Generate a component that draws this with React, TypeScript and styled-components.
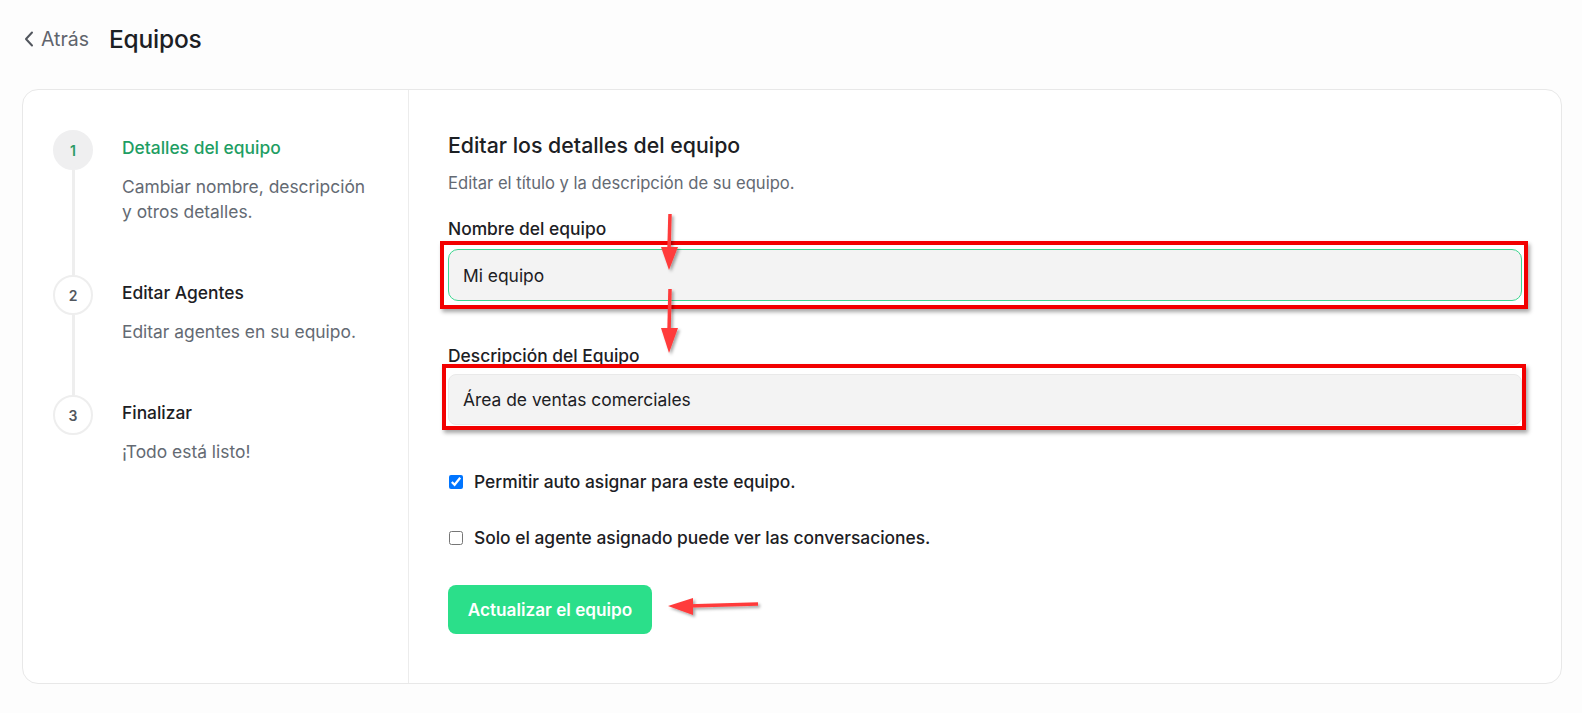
import React from "react";
import styled, { createGlobalStyle } from "styled-components";

const Global = createGlobalStyle`
  * { box-sizing: border-box; }
  html, body { margin: 0; padding: 0; background: #fdfdfd; }
  body { font-family: Inter, "Noto Sans", "Liberation Sans", sans-serif; color: #1c2024; }
`;

const Page = styled.div`
  position: relative;
  width: 1582px;
  height: 713px;
  padding: 0 20px 0 22px;
  overflow: hidden;
`;

const Header = styled.header`
  height: 89px;
  display: flex;
  align-items: center;
  padding-bottom: 11px;
  gap: 20px;
`;

const BackLink = styled.a`
  display: flex;
  align-items: center;
  gap: 7px;
  color: #60646c;
  font-size: 19.5px;
  text-decoration: none;
  padding-left: 2px;
`;

const Title = styled.h1`
  margin: 0;
  font-size: 24.5px;
  font-weight: 500;
  color: #1c2024;
  letter-spacing: -0.2px;
`;

const Card = styled.section`
  display: grid;
  grid-template-columns: 386px 1fr;
  height: 595px;
  background: #fff;
  border: 1px solid #e8e8e8;
  border-radius: 16px;
`;

const Sidebar = styled.aside`
  border-right: 1px solid #ececec;
  padding: 40px 20px 0 30px;
  display: flex;
  flex-direction: column;
`;

const Step = styled.div<{ $last?: boolean }>`
  position: relative;
  display: grid;
  grid-template-columns: 40px 1fr;
  column-gap: 29px;
  padding-bottom: ${(p) => (p.$last ? 0 : 51)}px;
  &::before {
    content: "";
    display: ${(p) => (p.$last ? "none" : "block")};
    position: absolute;
    left: 19px;
    top: 40px;
    bottom: 0;
    width: 2.5px;
    background: #eeeeee;
  }
`;

const Circle = styled.div<{ $active?: boolean }>`
  width: 40px;
  height: 40px;
  border-radius: 50%;
  display: flex;
  align-items: center;
  justify-content: center;
  font-size: 14px;
  font-weight: 600;
  color: ${(p) => (p.$active ? "#2b9a66" : "#52575e")};
  background: ${(p) => (p.$active ? "#efeff0" : "#fff")};
  border: 2px solid ${(p) => (p.$active ? "#efeff0" : "#eeeeee")};
`;

const StepText = styled.div`
  padding-top: 6px;
`;

const StepTitle = styled.div<{ $active?: boolean }>`
  font-size: 17.4px;
  line-height: 24px;
  font-weight: 500;
  color: ${(p) => (p.$active ? "#1e9e63" : "#1c2024")};
  margin-bottom: 14px;
`;

const StepDesc = styled.div`
  font-size: 17.4px;
  line-height: 25px;
  color: #646a73;
`;

const Main = styled.main`
  padding: 41px 39px 0 39px;
  display: flex;
  flex-direction: column;
`;

const Heading = styled.h2`
  margin: 0;
  font-size: 21.3px;
  line-height: 28px;
  font-weight: 500;
  color: #1c2024;
`;

const Sub = styled.p`
  margin: 13px 0 0;
  font-size: 16.6px;
  line-height: 22px;
  color: #646a73;
`;

const Label = styled.label<{ $top: number }>`
  display: block;
  margin-top: ${(p) => p.$top}px;
  font-size: 17.4px;
  line-height: 24px;
  font-weight: 500;
  color: #1c2024;
`;

const Annotated = styled.div<{ $t: number; $r: number; $b: number; $l: number; $mt: number }>`
  position: relative;
  margin-top: ${(p) => p.$mt}px;
  &::after {
    content: "";
    position: absolute;
    top: -${(p) => p.$t}px;
    right: -${(p) => p.$r}px;
    bottom: -${(p) => p.$b}px;
    left: -${(p) => p.$l}px;
    border: 4px solid #f20000;
    box-shadow: 2px 3px 4px rgba(0, 0, 0, 0.35);
    pointer-events: none;
  }
`;

const TextField = styled.input<{ $focus?: boolean }>`
  display: block;
  width: 100%;
  height: 52px;
  padding: 0 14px;
  font: inherit;
  font-size: 17.4px;
  color: #1c2024;
  background: #f3f3f3;
  border: 1px solid ${(p) => (p.$focus ? "#3bd68f" : "#e6e6e6")};
  border-radius: 10px;
  outline: none;
`;

const TextArea = styled.div`
  height: 51px;
  padding: 0 14px;
  display: flex;
  align-items: center;
  font-size: 17.4px;
  color: #1c2024;
  background: #f3f3f3;
  border: 1px solid #e9e9e9;
  border-radius: 8px;
`;

const CheckRow = styled.label<{ $mt: number }>`
  display: flex;
  align-items: center;
  gap: 11px;
  margin-top: ${(p) => p.$mt}px;
  font-size: 17.4px;
  line-height: 22px;
  font-weight: 500;
  color: #1c2024;
  input {
    margin: 0 0 0 1px;
    width: 14px;
    height: 14px;
  }
`;

const Button = styled.button`
  margin-top: 36px;
  width: 204px;
  height: 49px;
  border: none;
  border-radius: 8px;
  background: #2bdf8a;
  color: #fff;
  font: inherit;
  font-size: 17.2px;
  font-weight: 600;
  cursor: pointer;
`;

const Overlay = styled.svg`
  position: absolute;
  left: 0;
  top: 0;
  pointer-events: none;
`;

export default function App() {
  return (
    <Page>
      <Global />
      <Header>
        <BackLink href="#">
          <svg width="10" height="16" viewBox="0 0 10 16">
            <path d="M8 1.5 L2 8 L8 14.5" fill="none" stroke="#52575e" strokeWidth="2" strokeLinecap="round" strokeLinejoin="round" />
          </svg>
          Atrás
        </BackLink>
        <Title>Equipos</Title>
      </Header>
      <Card>
        <Sidebar>
          <Step>
            <Circle $active>1</Circle>
            <StepText>
              <StepTitle $active>Detalles del equipo</StepTitle>
              <StepDesc>
                Cambiar nombre, descripción
                <br />y otros detalles.
              </StepDesc>
            </StepText>
          </Step>
          <Step>
            <Circle>2</Circle>
            <StepText>
              <StepTitle>Editar Agentes</StepTitle>
              <StepDesc>Editar agentes en su equipo.</StepDesc>
            </StepText>
          </Step>
          <Step $last>
            <Circle>3</Circle>
            <StepText>
              <StepTitle>Finalizar</StepTitle>
              <StepDesc>¡Todo está listo!</StepDesc>
            </StepText>
          </Step>
        </Sidebar>
        <Main>
          <Heading>Editar los detalles del equipo</Heading>
          <Sub>Editar el título y la descripción de su equipo.</Sub>
          <Label $top={23}>Nombre del equipo</Label>
          <Annotated $mt={8} $t={8} $r={6} $b={8} $l={8}>
            <TextField $focus defaultValue="Mi equipo" />
          </Annotated>
          <Label $top={43}>Descripción del Equipo</Label>
          <Annotated $mt={6} $t={10} $r={4} $b={5} $l={6}>
            <TextArea>Área de ventas comerciales</TextArea>
          </Annotated>
          <CheckRow $mt={46}>
            <input type="checkbox" defaultChecked />
            Permitir auto asignar para este equipo.
          </CheckRow>
          <CheckRow $mt={34}>
            <input type="checkbox" />
            Solo el agente asignado puede ver las conversaciones.
          </CheckRow>
          <div>
            <Button>Actualizar el equipo</Button>
          </div>
        </Main>
      </Card>
      <Overlay width="1582" height="713" viewBox="0 0 1582 713">
        <defs>
          <filter id="sh" x="-50%" y="-50%" width="200%" height="200%">
            <feDropShadow dx="2" dy="2" stdDeviation="1.5" floodColor="#000" floodOpacity="0.35" />
          </filter>
        </defs>
        <g fill="#ff3b3b" stroke="#ff3b3b" filter="url(#sh)">
          <line x1="670" y1="214" x2="669" y2="250" strokeWidth="3.5" />
          <polygon points="661,247 678,247 669,270" stroke="none" />
          <line x1="670" y1="289" x2="669" y2="332" strokeWidth="3.5" />
          <polygon points="661,328 678,328 669,353" stroke="none" />
          <line x1="758" y1="604" x2="688" y2="606" strokeWidth="3.5" />
          <polygon points="693,598 693,615 668,606" stroke="none" />
        </g>
      </Overlay>
    </Page>
  );
}
